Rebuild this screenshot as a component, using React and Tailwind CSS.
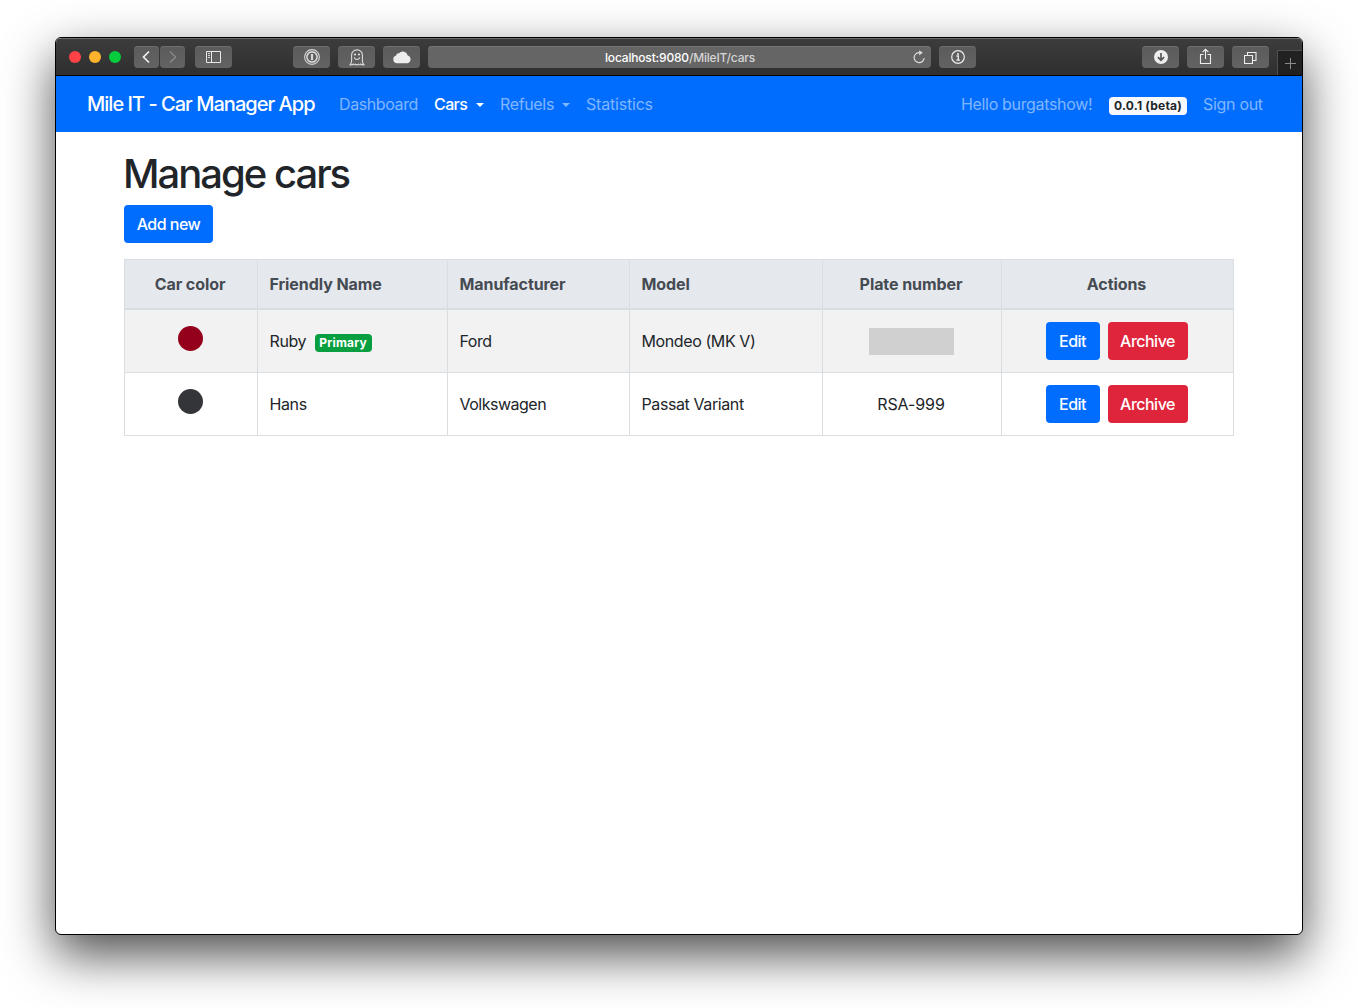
import React from "react";

function ToolButton({ className = "", children }) {
  return (
    <div
      className={
        "flex h-[22px] items-center justify-center rounded-[4px] bg-linear-to-b from-[#5b5b5b] to-[#636363] shadow-[inset_0_1px_0_#6d6d6d] " +
        className
      }
    >
      {children}
    </div>
  );
}

function TrafficLights() {
  return (
    <div className="ml-[13px] flex gap-2">
      <span className="size-3 rounded-full bg-[#ff4245]" />
      <span className="size-3 rounded-full bg-[#fdb32b]" />
      <span className="size-3 rounded-full bg-[#05cc3c]" />
    </div>
  );
}

function Toolbar() {
  return (
    <div className="flex h-[38px] items-center border-t border-b border-t-[#6c6c6c] border-b-[#050505] bg-linear-to-b from-[#3c3c3c] to-[#2f2f2f]">
      <TrafficLights />
      <ToolButton className="ml-[13px] w-[25px]">
        <svg className="mr-px" width="10" height="14" viewBox="0 0 10 14" fill="none" stroke="#f0f0f0" strokeWidth="1.7">
          <path d="M8 1.5 2.5 7 8 12.5" />
        </svg>
      </ToolButton>
      <ToolButton className="ml-px w-[25px]">
        <svg width="10" height="14" viewBox="0 0 10 14" fill="none" stroke="#8a8a8a" strokeWidth="1.4">
          <path d="M2 1.5 7.5 7 2 12.5" />
        </svg>
      </ToolButton>
      <ToolButton className="ml-[10px] w-[37px]">
        <svg width="15" height="12" viewBox="0 0 15 12" fill="none" stroke="#e8e8e8" strokeWidth="1">
          <path d="M.5.5h14v11H.5zM5.5.5v11" />
          <path d="M2 2.500h2M2 4.500h2M2 6.500h2" strokeWidth="0.9" />
        </svg>
      </ToolButton>
      <ToolButton className="ml-[61px] w-[37px]">
        <svg width="16" height="16" viewBox="0 0 16 16" fill="none" stroke="#d6d6d6">
          <circle cx="8" cy="8" r="7.4" strokeWidth="1.1" />
          <circle cx="8" cy="8" r="5.1" strokeWidth="1.6" />
          <path d="M8 4.9v6.2" strokeWidth="2.2" />
        </svg>
      </ToolButton>
      <ToolButton className="ml-2 w-[37px]">
        <svg width="16" height="17" viewBox="0 0 16 17" fill="none" stroke="#dcdcdc" strokeWidth="1.1">
          <path d="M2.6 12V6.2C2.6 2.8 4.8.9 8 .9s5.4 1.9 5.400 5.300V12c0 1.400.5 2.700 1.600 3.800-1.500.3-2.700 0-3.500-.8-.7.8-1.500 1.100-2 .2-.9.9-2.100.9-3 0-.5.9-1.300.6-2-.2-.8.8-2 1.100-3.500.8C2.100 14.700 2.600 13.400 2.600 12z" />
          <path d="M5.200 8.500c.6 1.500 1.600 2 2.800 2s2.200-.5 2.800-2" />
          <circle cx="6" cy="5.500" r="1.1" fill="#dcdcdc" stroke="none" />
          <circle cx="10" cy="5.500" r="1.1" fill="#dcdcdc" stroke="none" />
        </svg>
      </ToolButton>
      <ToolButton className="ml-2 w-[37px]">
        <svg className="mb-px" width="20" height="14" viewBox="0 0 20 14" fill="#ededed">
          <path d="M5 13.200a4 4 0 0 1-.9-7.800A2.600 2.600 0 0 1 7 3.300 5 5 0 0 1 15.700 5.600 3.900 3.900 0 0 1 15.300 13.200z" />
        </svg>
      </ToolButton>
      <div className="ml-2 flex h-[22px] w-[503px] items-center rounded-[4px] bg-[#656565] shadow-[inset_0_1px_0_#757575]">
        <span className="mt-px ml-[177px] w-[290px] text-[12px] leading-[22px] font-medium tracking-[-0.18px] whitespace-nowrap text-white">
          localhost:9080<span className="text-[#d6d6d6]">/MileIT/cars</span>
        </span>
        <svg className="ml-[17px]" width="14" height="14" viewBox="0 0 14 14" fill="none" stroke="#dedede" strokeWidth="1.200">
          <path d="M7.500 2.700A5 5 0 1 0 12.100 8" />
          <path d="M7.200.2 10.800 2.700 7.200 5.300z" fill="#dedede" stroke="none" />
        </svg>
      </div>
      <ToolButton className="ml-2 w-[37px]">
        <svg width="14" height="14" viewBox="0 0 14 14" fill="none" stroke="#ededed">
          <circle cx="7" cy="7" r="6.300" strokeWidth="1.200" />
          <path d="M5.500 6h1.800v4M5.300 10.200h3.600" strokeWidth="1.300" />
          <circle cx="7" cy="3.900" r="1" fill="#ededed" stroke="none" />
        </svg>
      </ToolButton>
      <ToolButton className="ml-[166px] w-[37px]">
        <svg width="14" height="14" viewBox="0 0 14 14">
          <circle cx="7" cy="7" r="7" fill="#ededed" />
          <path d="M7 3v7M3.900 7.200 7 10.300l3.100-3.100" fill="none" stroke="#555" strokeWidth="1.700" />
        </svg>
      </ToolButton>
      <ToolButton className="ml-2 w-[37px]">
        <svg className="mb-px" width="13" height="17" viewBox="0 0 13 17" fill="none" stroke="#ededed" strokeWidth="1.100">
          <path d="M4.500 6.500H1.500v9h10v-9h-3M6.500 11V1.500M3.600 4.200l2.900-2.900 2.900 2.900" />
        </svg>
      </ToolButton>
      <ToolButton className="ml-2 w-[37px]">
        <svg width="13" height="13" viewBox="0 0 13 13" fill="none" stroke="#ededed" strokeWidth="1.100">
          <path d="M.5 4.500h8v8h-8zM3.500 4.500V1.500h8.500v8H8.500" />
        </svg>
      </ToolButton>
      <div className="ml-2 flex h-[25px] w-[25px] shrink-0 items-center justify-center self-end border-t border-l border-[#505050] bg-[#212121]">
        <svg width="11" height="11" viewBox="0 0 11 11" stroke="#8c8c8c">
          <path d="M5.500 0v11M0 5.500h11" />
        </svg>
      </div>
    </div>
  );
}

function Caret() {
  return <span className="mt-px border-x-[4.8px] border-t-[4.8px] border-x-transparent border-t-current" />;
}

function Navbar() {
  return (
    <nav className="flex h-14 items-center bg-[#006dff] text-[16px] leading-6 whitespace-nowrap text-[#80b6ff]">
      <span className="ml-[31px] w-[252px] text-[20px] font-medium tracking-[-0.98px] text-white">
        Mile IT - Car Manager App
      </span>
      <span className="w-[95px] tracking-[-0.4px]">Dashboard</span>
      <span className="flex w-[66px] items-center font-medium text-white">
        <span className="w-[42px] tracking-[-0.6px]">Cars</span>
        <Caret />
      </span>
      <span className="flex w-[86px] items-center">
        <span className="w-[62px] tracking-[-0.35px]">Refuels</span>
        <Caret />
      </span>
      <span className="tracking-[-0.2px]">Statistics</span>
      <span className="ml-auto w-[148px] tracking-[-0.33px]">Hello burgatshow!</span>
      <span className="mt-[3px] flex h-[18px] w-[78px] items-center justify-center rounded-[4px] bg-[#f8f9fa] text-[12px] font-bold tracking-[0.2px] text-[#212529]">
        0.0.1 (beta)
      </span>
      <span className="ml-4 w-[99px] tracking-[-0.3px]">Sign out</span>
    </nav>
  );
}

function Button({ className = "", children }) {
  return (
    <button
      className={
        "flex h-[38px] items-center justify-center rounded-[4px] text-[16px] font-medium tracking-[-0.52px] whitespace-nowrap text-white " +
        className
      }
    >
      {children}
    </button>
  );
}

const GRID = "grid grid-cols-[133px_190px_182px_193px_179px_233px]";
const CELL = "flex items-center border-l border-[#d9dee2] pl-[11.5px] pr-[13.5px] last:border-r ";

function CarRow({ dot, name, primary, maker, model, plate, stripe }) {
  return (
    <div className={GRID + " h-[63px] border-b border-[#d9dee2] " + stripe}>
      <div className={CELL + "justify-center"}>
        <span className={"mb-[6px] size-[25px] rounded-full " + dot} />
      </div>
      <div className={CELL}>
        <span className="tracking-[-0.4px]">{name}</span>
        {primary && (
          <span className="mt-[3px] ml-[8.5px] flex h-[18px] w-[57px] items-center justify-center rounded-[4px] bg-[#079f3f] text-[12px] font-bold tracking-[0.2px] text-white">
            Primary
          </span>
        )}
      </div>
      <div className={CELL + "tracking-[-0.5px]"}>{maker}</div>
      <div className={CELL + "tracking-[-0.4px]"}>{model}</div>
      <div className={CELL + "justify-center tracking-[-0.1px]"}>
        {plate ? plate : <span className="h-[27px] w-[85px] bg-[#d0d0d0]" />}
      </div>
      <div className={CELL + "justify-center gap-2"}>
        <Button className="w-[54px] bg-[#006dff]">Edit</Button>
        <Button className="w-[80px] bg-[#df253c]">Archive</Button>
      </div>
    </div>
  );
}

function CarTable() {
  return (
    <div className="mt-4 w-[1110px] border-t border-[#d9dee2] text-[16px] whitespace-nowrap text-[#212529]">
      <div
        className={
          GRID + " h-[50px] border-b-2 border-[#d9dee2] bg-[#e5e8ed] font-bold tracking-[-0.07px] text-[#454b52]"
        }
      >
        <div className={CELL + "justify-center"}>Car color</div>
        <div className={CELL}>Friendly Name</div>
        <div className={CELL}>Manufacturer</div>
        <div className={CELL}>Model</div>
        <div className={CELL + "justify-center"}>Plate number</div>
        <div className={CELL + "justify-center"}>Actions</div>
      </div>
      <CarRow dot="bg-[#94001b]" name="Ruby" primary maker="Ford" model="Mondeo (MK V)" stripe="bg-[#f2f2f2]" />
      <CarRow dot="bg-[#343539]" name="Hans" maker="Volkswagen" model="Passat Variant" plate="RSA-999" stripe="bg-white" />
    </div>
  );
}

export default function App() {
  return (
    <div className="h-[1008px] w-[1358px] overflow-hidden bg-white pt-[37px] pl-[55px] font-[Inter,sans-serif]">
      <div className="h-[898px] w-[1248px] overflow-hidden rounded-[6px] border border-black bg-white shadow-[0_20px_50px_rgba(0,0,0,0.7)]">
        <Toolbar />
        <Navbar />
        <main className="pl-[68px]">
          <h1 className="mt-[18px] -ml-px text-[40px] leading-[48px] font-medium tracking-[-2px] text-[#212529]">
            Manage cars
          </h1>
          <Button className="mt-[7px] w-[89px] bg-[#006dff]">Add new</Button>
          <CarTable />
        </main>
      </div>
    </div>
  );
}
